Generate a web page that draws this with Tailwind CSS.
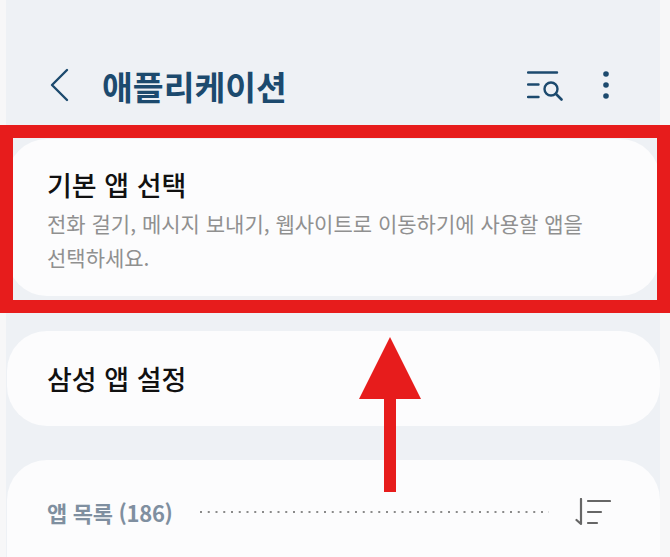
<!DOCTYPE html>
<html lang="ko">
<head>
  <meta charset="UTF-8">
  <meta name="viewport" content="width=device-width, initial-scale=1.0">
  <title>애플리케이션</title>
  <script src="https://cdn.jsdelivr.net/npm/@tailwindcss/browser@4"></script>
</head>
<body class="bg-[#f7f7f8] font-['Noto_Sans_CJK_KR','Noto_Sans',sans-serif]">
  <div class="relative w-[670px] h-[557px] overflow-hidden">
    <main class="ml-[6px] w-[654px] h-[557px] bg-[#eef1f5] overflow-hidden">
      <!-- app bar -->
      <header class="h-[139px] pt-[63px] flex items-start text-[#1c4a6e]">
        <svg class="ml-[43px] mt-[5px] w-[22px] h-[34px]" viewBox="0 0 22 34" fill="none" stroke="#1c4a6e" stroke-width="2.4" stroke-linecap="round" stroke-linejoin="round">
          <path d="M18 2 L3 17 L18 32"/>
        </svg>
        <h1 class="ml-[31px] text-[33.5px] leading-[46px] font-bold">애플리케이션</h1>
        <svg class="ml-auto mt-[8px] w-[36px] h-[30px]" viewBox="0 0 36 30" fill="none" stroke="#1c4a6e" stroke-linecap="round">
          <path d="M1 1.5 H30" stroke-width="2.4"/>
          <path d="M1 13.5 H11.5 M1 26 H11.5" stroke-width="2.4"/>
          <circle cx="24" cy="18" r="6.5" stroke-width="2.4"/>
          <path d="M29 23 L34.5 28.5" stroke-width="2.6"/>
        </svg>
        <svg class="ml-[39px] mr-[50px] mt-[7px] w-[8px] h-[30px]" viewBox="0 0 8 30" fill="#1c4a6e">
          <circle cx="4" cy="4" r="2.8"/>
          <circle cx="4" cy="15" r="2.8"/>
          <circle cx="4" cy="26" r="2.8"/>
        </svg>
      </header>

      <section class="ml-[1px] h-[157px] rounded-[40px] bg-[#fcfcfd] px-[40px] pt-[27px]">
        <h2 class="text-[27px] leading-[38px] font-medium text-[#111]">기본 앱 선택</h2>
        <p class="mt-[2px] text-[21px] leading-[34px] text-[#909090]">전화 걸기, 메시지 보내기, 웹사이트로 이동하기에 사용할 앱을<br>선택하세요.</p>
      </section>

      <section class="ml-[1px] mt-[35px] h-[95px] rounded-[40px] bg-[#fcfcfd] px-[40px] flex items-center">
        <h2 class="text-[27px] leading-[38px] font-medium text-[#111]">삼성 앱 설정</h2>
      </section>

      <section class="ml-[1px] mt-[34px] h-[140px] rounded-t-[40px] bg-[#fcfcfd] pl-[40px] pt-[36px] flex items-start">
        <span class="w-[125px] text-[22px] leading-[32px] font-bold text-[#7f8fa0] tracking-[-0.3px] whitespace-nowrap">앱 목록 (186)</span>
        <svg class="ml-[28px] mt-[15px] w-[349px] h-[2px]" viewBox="0 0 349 2">
          <line x1="0" y1="1" x2="349" y2="1" stroke="#8a8a8a" stroke-width="2" stroke-dasharray="2 5.75"/>
        </svg>
        <svg class="ml-[26px] mt-[2px] w-[36px] h-[28px]" viewBox="0 0 36 28" fill="none" stroke="#666" stroke-width="2.2" stroke-linecap="round" stroke-linejoin="round">
          <path d="M6 1 V26 L1.5 22"/>
          <path d="M13 3 H35 M13 14 H26 M13 25 H22"/>
        </svg>
      </section>
    </main>

    <!-- annotations over the screenshot -->
    <div class="absolute left-0 top-[125px] w-[670px] h-[188px] border-[13px] border-[#e71c1c]"></div>
    <svg class="absolute left-[359px] top-[337px] w-[62px] h-[155px]" viewBox="0 0 62 155" fill="#e71c1c">
      <path d="M31 0 L62 62 H37 V155 H25 V62 H0 Z"/>
    </svg>
  </div>
</body>
</html>
